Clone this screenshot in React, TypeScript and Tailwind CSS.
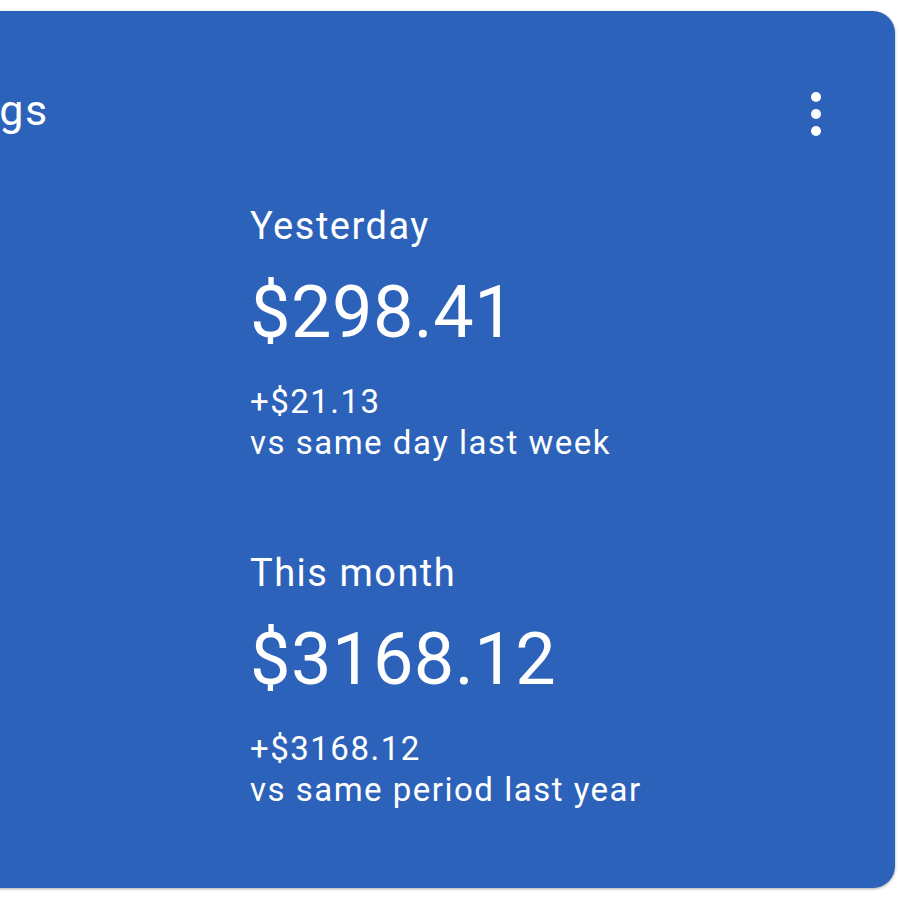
const font = { fontFamily: 'Roboto, "Noto Sans", Arial, sans-serif' };

interface Stat {
  label: string;
  amount: string;
  delta: string;
  compare: string;
}

const stats: Stat[] = [
  { label: 'Yesterday', amount: '$298.41', delta: '+$21.13', compare: 'vs same day last week' },
  { label: 'This month', amount: '$3168.12', delta: '+$3168.12', compare: 'vs same period last year' },
];

function Kebab() {
  return (
    <div className="flex flex-col items-center gap-[7px]">
      <span className="w-[10px] h-[10px] rounded-full bg-white" />
      <span className="w-[10px] h-[10px] rounded-full bg-white" />
      <span className="w-[10px] h-[10px] rounded-full bg-white" />
    </div>
  );
}

function StatBlock({ stat }: { stat: Stat }) {
  return (
    <div className="flex flex-col text-white">
      <p className="text-[38px] leading-[44px] tracking-[1.5px]">{stat.label}</p>
      <p className="mt-[25px] text-[72px] leading-[80px] tracking-[0.5px]">{stat.amount}</p>
      <p className="mt-[28px] text-[33px] leading-[41px] tracking-[1.5px]">{stat.delta}</p>
      <p className="text-[33px] leading-[41px] tracking-[1.5px]">{stat.compare}</p>
    </div>
  );
}

export default function App() {
  return (
    <div className="w-[900px] h-[900px] bg-white overflow-hidden pt-[11px]" style={font}>
      <div className="ml-[-154px] w-[1049px] h-[877px] rounded-[22px] bg-[#2c62b9] shadow-[0_1px_3px_rgba(0,0,0,0.35)] pl-6 pt-[75px]">
        <div className="flex items-start justify-between pr-[74px]">
          <h2 className="text-[43px] leading-[48px] tracking-[1.5px] text-white">Earnings</h2>
          <div className="pt-[6px]">
            <Kebab />
          </div>
        </div>
        <div className="pl-[380px] mt-[68px] flex flex-col gap-[88px]">
          {stats.map((s) => (
            <StatBlock key={s.label} stat={s} />
          ))}
        </div>
      </div>
    </div>
  );
}
